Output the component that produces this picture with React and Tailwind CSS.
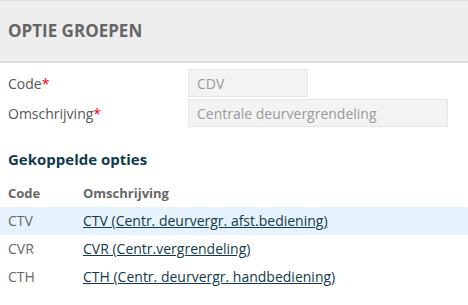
import React from "react";

const rows = [
  { code: "CTV", label: "CTV (Centr. deurvergr. afst.bediening)", active: true },
  { code: "CVR", label: "CVR (Centr.vergrendeling)" },
  { code: "CTH", label: "CTH (Centr. deurvergr. handbediening)" },
];

const App = () => {
  return (
    <div
      className="w-[468px] h-[305px] bg-white overflow-hidden text-[14px] text-[#555]"
      style={{ fontFamily: "'Open Sans', sans-serif" }}
    >
      {/* HEADER */}
      <div className="h-[63px] bg-[#eeeeee] border-t border-[#dddddd] border-b-2 flex items-center px-2">
        <h1 className="text-[17px] font-bold text-[#666]">OPTIE GROEPEN</h1>
      </div>

      {/* FORM */}
      <div className="pt-[6px] space-y-[2px]">
        <div className="flex items-center h-[28px]">
          <label className="w-[188px] pl-2">
            Code<span className="text-red-600">*</span>
          </label>
          <div className="w-[120px] h-[28px] bg-[#f3f3f3] border border-[#e6e6e6] flex items-center px-2 text-[#999]">
            CDV
          </div>
        </div>
        <div className="flex items-center h-[28px]">
          <label className="w-[188px] pl-2">
            Omschrijving<span className="text-red-600">*</span>
          </label>
          <div className="w-[260px] h-[28px] bg-[#f3f3f3] border border-[#e6e6e6] flex items-center px-2 text-[#999]">
            Centrale deurvergrendeling
          </div>
        </div>
      </div>

      {/* GEKOPPELDE OPTIES */}
      <h2 className="mt-[21px] px-2 text-[15px] font-bold text-[#123a4a]">
        Gekoppelde opties
      </h2>
      <table className="mt-[10px] w-full text-left border-collapse">
        <thead>
          <tr className="font-bold text-[#666] text-[13px]">
            <th className="h-[26px] w-[83px] pl-2">Code</th>
            <th>Omschrijving</th>
          </tr>
        </thead>
        <tbody>
          {rows.map((r) => (
            <tr key={r.code} className={r.active ? "bg-[#e6f2fc]" : ""}>
              <td className="h-[28px] pl-2 text-[#666]">{r.code}</td>
              <td>
                <a href="#" className="underline text-[#123a4a]">
                  {r.label}
                </a>
              </td>
            </tr>
          ))}
        </tbody>
      </table>
    </div>
  );
};

export default App;
